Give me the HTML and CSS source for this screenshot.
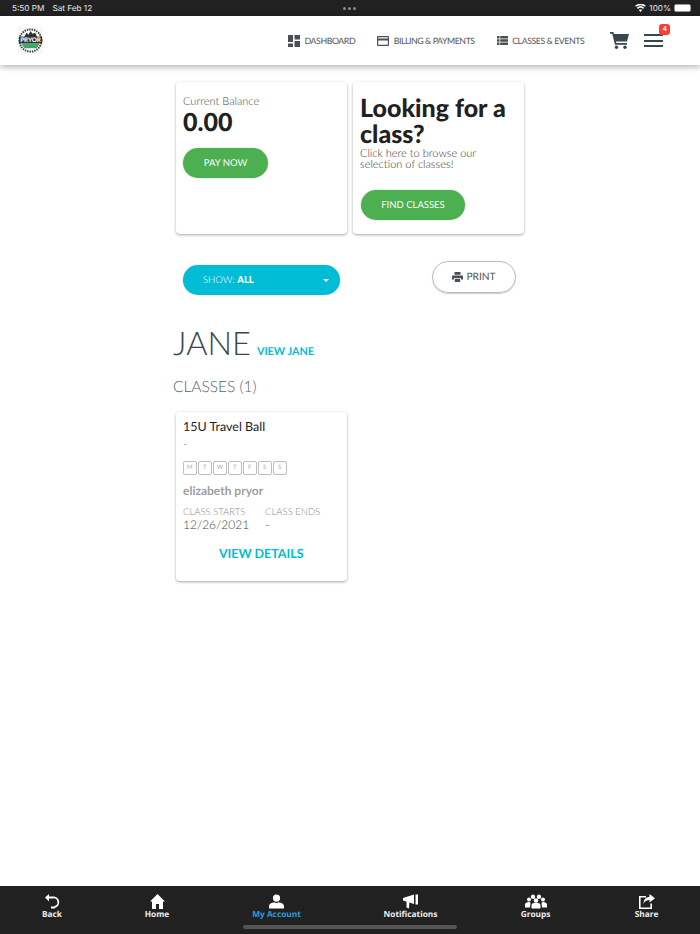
FILE: index.html
```html
<!DOCTYPE html>
<html lang="en">
<head>
    <meta charset="UTF-8">
    <title>My Account</title>
    <link rel="stylesheet" href="styles.css">
</head>
<body>
<div class="status">
    <div class="status-time"><span>5:50 PM</span><span>Sat Feb 12</span></div>
    <div class="status-dots"><i></i><i></i><i></i></div>
    <div class="status-right">
        <svg width="11" height="8" viewBox="0 0 22 16"><path fill="#fff" d="M11 16l-3.400-4a5 5 0 0 1 6.800 0zM5.800 9.800L3.700 7.400a11 11 0 0 1 14.600 0l-2.100 2.400a8 8 0 0 0-10.400 0zM2.300 5.700L.3 3.400a16 16 0 0 1 21.400 0l-2 2.300a13 13 0 0 0-17.400 0z"/></svg>
        <span>100%</span>
        <span class="battery"><b></b></span>
    </div>
</div>

<header class="topbar">
    <svg class="logo" width="25" height="27" viewBox="0 0 26 28">
        <rect width="26" height="28" fill="#f7f7f5"/>
        <circle cx="13" cy="14" r="11.500" fill="#fff" stroke="#3a3f3a" stroke-width="2" stroke-dasharray="1.500 1"/>
        <path fill="#2d332e" d="M6 11l3-5 2 2 2-4 2 3 3-1 2 5z"/>
        <path fill="#3fa862" d="M3.500 17h19l-3 5h-13z"/>
        <rect x="1" y="10" width="24" height="7" fill="#2c322d"/>
        <text x="13" y="16" class="logo-text">PRYOR</text>
    </svg>
    <nav class="topnav">
        <a class="navlink">
            <svg width="12" height="12" viewBox="0 0 12 12"><path fill="#4a4f54" d="M0 0h5v7H0zM6.500 0H12v4.500H6.500zM6.500 6H12v6H6.500zM0 8.500h5V12H0z"/></svg>
            DASHBOARD
        </a>
        <a class="navlink">
            <svg width="12" height="10" viewBox="0 0 12 10"><path fill="#4a4f54" fill-rule="evenodd" d="M1 0h10a1 1 0 0 1 1 1v8a1 1 0 0 1-1 1H1a1 1 0 0 1-1-1V1a1 1 0 0 1 1-1zm.2 1.200v1.300h9.600V1.200zm0 3.200v4.400h9.600V4.400z"/></svg>
            BILLING &amp; PAYMENTS
        </a>
        <a class="navlink">
            <svg width="11" height="9" viewBox="0 0 11 9"><path fill="#4a4f54" d="M0 0h2.500v2.500H0zM3.200 0H11v2.500H3.200zM0 3.200h2.500v2.600H0zM3.200 3.200H11v2.600H3.200zM0 6.500h2.500V9H0zM3.200 6.500H11V9H3.200z"/></svg>
            CLASSES &amp; EVENTS
        </a>
    </nav>
    <svg class="cart" width="19" height="17" viewBox="0 0 19 17"><path fill="#37474f" d="M0 0h3.400l.6 2H19l-2 7.500H6l.4 1.500H17v1.700H5L2.200 1.700H0z"/><circle cx="6.500" cy="15.300" r="1.700" fill="#37474f"/><circle cx="15" cy="15.300" r="1.700" fill="#37474f"/></svg>
    <div class="menu">
        <i></i><i></i><i></i>
        <span class="badge">4</span>
    </div>
</header>

<main class="content">
    <div class="cards">
        <section class="card balance">
            <p class="balance-label">Current Balance</p>
            <p class="balance-value">0.00</p>
            <a class="btn-green pay">PAY NOW</a>
        </section>
        <section class="card promo">
            <h2>Looking for a class?</h2>
            <p>Click here to browse our selection of classes!</p>
            <a class="btn-green find">FIND CLASSES</a>
        </section>
    </div>

    <div class="filters">
        <div class="show-select">
            <span>SHOW: <b>ALL</b></span>
            <i class="caret"></i>
        </div>
        <a class="print">
            <svg width="11" height="10" viewBox="0 0 11 10"><path fill="#4a4f54" d="M2.500 0h6v2.800h-6zM1 3.400h9a1 1 0 0 1 1 1V7.500H9V6H2v1.500H0V4.400a1 1 0 0 1 1-1zM2.800 6.800h5.400V10H2.800z"/></svg>
            PRINT
        </a>
    </div>

    <div class="student">
        <h1>JANE</h1>
        <a>VIEW JANE</a>
    </div>
    <h3 class="classes-title">CLASSES (1)</h3>

    <section class="card class-card">
        <h4>15U Travel Ball</h4>
        <p class="dash">-</p>
        <div class="days">
            <span>M</span><span>T</span><span>W</span><span>T</span><span>F</span><span>S</span><span>S</span>
        </div>
        <p class="coach">elizabeth pryor</p>
        <div class="dates">
            <div class="date-col">
                <small>CLASS STARTS</small>
                <span>12/26/2021</span>
            </div>
            <div class="date-col">
                <small>CLASS ENDS</small>
                <span>-</span>
            </div>
        </div>
        <a class="details">VIEW DETAILS</a>
    </section>
</main>

<footer class="tabbar">
    <a class="tab tab-back">
        <svg width="16" height="15" viewBox="0 0 16 15"><path fill="none" stroke="#fff" stroke-width="1.800" d="M3 3.500h5.500a4.800 4.800 0 0 1 2 9.500"/><path fill="#fff" d="M1 3.500L5 0v7.500z"/><path fill="#fff" d="M7 12.500h4v2H7z"/></svg>
        Back
    </a>
    <a class="tab tab-home">
        <svg width="15" height="15" viewBox="0 0 15 15"><path fill="#fff" d="M7.500 0L15 7.500h-2V15H9V10H6v5H2V7.500H0z"/></svg>
        Home
    </a>
    <a class="tab tab-account active">
        <svg width="15" height="15" viewBox="0 0 15 14"><circle cx="7.500" cy="3.600" r="3.600" fill="#fff"/><path fill="#fff" d="M0 14v-2.500C0 9.500 3 8 5 7.800c1.500 1 3.500 1 5 0 2 .2 5 1.700 5 3.700V14z"/></svg>
        My Account
    </a>
    <a class="tab tab-notify">
        <svg width="15" height="15" viewBox="0 0 15 14"><path fill="#fff" d="M0 3.500L11 0v9.500L6.300 8 6 14 3.500 13 3.500 7 0 6zM12.500 0H15v10h-2.500z"/></svg>
        Notifications
    </a>
    <a class="tab tab-groups">
        <svg width="22" height="15" viewBox="0 0 22 14"><g fill="#fff"><circle cx="4" cy="5" r="2"/><circle cx="18" cy="5" r="2"/><circle cx="8" cy="2.200" r="2.200"/><circle cx="14" cy="2.200" r="2.200"/><circle cx="11" cy="6" r="2.300"/><path d="M0 13v-3c0-1.500 1.500-2.500 4-2.500l1.500.5L5 13zM22 13v-3c0-1.500-1.500-2.500-4-2.500l-1.500.5.500 5zM6.500 14v-3.500c0-1.500 2-2.300 4.500-2.300s4.500.8 4.500 2.300V14z"/></g></svg>
        Groups
    </a>
    <a class="tab tab-share">
        <svg width="16" height="15" viewBox="0 0 16 15"><path fill="none" stroke="#fff" stroke-width="1.600" d="M7 2.800H.8v11.400h11.400V9.500"/><path fill="#fff" d="M10.500 0L16 4.300l-5.500 4.200V6C7.500 6 5.500 7 4.500 10c0-4.500 2.500-7 6-7.300z"/></svg>
        Share
    </a>
    <i class="home-indicator"></i>
</footer>
</body>
</html>
```

FILE: styles.css
```css
*{margin: 0; padding: 0; box-sizing: border-box;}
html, body{height: 100%;}
body{
    display: flex;
    flex-direction: column;
    height: 934px;
    overflow: hidden;
    background: #fff;
    font-family: "Lato", "Liberation Sans", sans-serif;
    color: #212121;
    text-rendering: geometricPrecision;
}
a{display: block; text-decoration: none;}

/* ios status bar */
.status{
    height: 16px;
    flex: none;
    background: #212121;
    color: #e8e8e8;
    font-family: "Inter", "Liberation Sans", sans-serif;
    font-size: 8.2px;
    display: flex;
    align-items: center;
    justify-content: space-between;
    padding: 0 9px 0 12px;
    position: relative;
}
.status-time{display: flex; gap: 8px;}
.status-dots{
    display: flex;
    gap: 2px;
    position: absolute;
    left: 343px;
    top: 7px;
}
.status-dots i{width: 3px; height: 3px; border-radius: 50%; background: #8a8a8a;}
.status-right{display: flex; align-items: center; gap: 3px;}
.battery{
    width: 17px;
    height: 8px;
    border: 1px solid #999;
    border-radius: 2px;
    display: block;
}
.battery b{display: block; height: 100%; background: #fff;}

/* top nav */
.topbar{
    height: 49px;
    flex: none;
    display: flex;
    align-items: center;
    padding-left: 18px;
    background: #fff;
    box-shadow: 0 2px 6px rgba(0, 0, 0, 0.3);
    position: relative;
}
.logo{flex: none;}
.logo-text{
    font-family: "Lato", sans-serif;
    font-weight: 900;
    font-size: 6.500px;
    fill: #fff;
    text-anchor: middle;
}
.topnav{
    display: flex;
    gap: 22px;
    margin-left: 245px;
}
.navlink{
    display: flex;
    align-items: center;
    gap: 4.500px;
    font-size: 8.800px;
    letter-spacing: -0.45px;
    color: #555;
    white-space: nowrap;
}
.cart{margin-left: 26px;}
.menu{
    width: 19px;
    margin-left: 15px;
    position: relative;
    display: flex;
    flex-direction: column;
    gap: 3.500px;
}
.menu i{display: block; height: 2px; background: #37474f;}
.badge{
    position: absolute;
    top: -10px;
    left: 15px;
    width: 11px;
    height: 11px;
    border-radius: 3px;
    background: #f44336;
    color: #fff;
    font-size: 7px;
    font-weight: 700;
    text-align: center;
    line-height: 11px;
}

/* main column */
.content{
    flex: 1;
    width: 360px;
    margin: 0 auto;
    padding-top: 17px;
}
.card{
    background: #fff;
    border-radius: 4px;
    box-shadow: 0 1px 3px rgba(0, 0, 0, 0.35);
}
.cards{
    display: flex;
    gap: 6.500px;
    padding: 0 6px;
}
.cards .card{width: 170.500px; height: 152px; padding: 12px 7px;}
.cards .balance{padding-top: 13px;}
.balance-label{
    font-size: 11px;
    font-weight: 300;
    line-height: 14px;
    color: #444;
}
.balance-value{
    font-size: 25px;
    font-weight: 900;
    line-height: 30px;
    margin-top: -2px;
    color: #212121;
}
.btn-green{
    background: #4caf50;
    color: #fff;
    font-size: 9.500px;
    text-align: center;
    border-radius: 15px;
    height: 30px;
    line-height: 32px;
    box-shadow: 0 0 2px rgba(0, 0, 0, 0.2);
}
.pay{width: 85px; margin-top: 11px;}
.promo h2{
    font-size: 25px;
    font-weight: 900;
    line-height: 26px;
    color: #212121;
    margin-top: 1px;
}
.promo p{
    font-size: 11px;
    font-weight: 300;
    line-height: 11px;
    color: #333;
    margin-top: 1px;
    width: 130px;
}
.find{width: 104px; margin: 20px 0 0 1px;}

/* filter row */
.filters{
    display: flex;
    justify-content: space-between;
    align-items: flex-start;
    padding: 27px 14px 0 13px;
}
.show-select{
    width: 157px;
    height: 30px;
    margin-top: 4px;
    background: #00bcd4;
    border-radius: 15px;
    color: #fff;
    font-size: 9.500px;
    display: flex;
    align-items: center;
    justify-content: space-between;
    padding: 0 11px 0 20px;
    box-shadow: 0 0 2px rgba(0, 0, 0, 0.2);
    font-weight: 300;
}
.show-select b{font-weight: 900;}
.caret{
    border: 3px solid transparent;
    border-top: 3px solid #fff;
    border-bottom: 0;
}
.print{
    width: 84px;
    height: 32px;
    border: 1px solid #bbb;
    border-radius: 16px;
    display: flex;
    align-items: center;
    justify-content: center;
    gap: 3px;
    font-size: 10.200px;
    line-height: 32px;
    color: #555;
    box-shadow: 0 1px 1px rgba(0, 0, 0, 0.2);
}

/* student */
.student{
    display: flex;
    align-items: baseline;
    gap: 6px;
    margin-top: 29px;
    padding-left: 3px;
}
.student h1{
    font-size: 32.500px;
    font-weight: 300;
    line-height: 38px;
    color: #37474f;
}
.student a{font-size: 10.800px; font-weight: 700; color: #00bcd4;}
.classes-title{
    font-size: 15.500px;
    font-weight: 300;
    line-height: 20px;
    color: #546070;
    margin: 15px 0 0 3px;
}

/* class card */
.class-card{
    width: 170.500px;
    height: 169px;
    margin: 15px 0 0 6px;
    padding: 7px;
}
.class-card h4{
    font-size: 12.500px;
    font-weight: 400;
    line-height: 16px;
    color: #212121;
}
.dash{font-size: 11px; font-weight: 300; line-height: 14px; color: #555; margin-top: 3px;}
.days{display: flex; gap: 1.500px; margin-top: 9px;}
.days span{
    width: 13.500px;
    height: 14px;
    border: 1px solid #bdbdbd;
    border-radius: 2px;
    font-size: 6px;
    line-height: 12px;
    text-align: center;
    color: #aaa;
}
.coach{
    font-size: 12px;
    font-weight: 700;
    line-height: 16px;
    color: #9e9e9e;
    margin-top: 8px;
}
.dates{display: flex; gap: 16px; margin-top: 9px;}
.date-col{display: flex; flex-direction: column;}
.date-col small{font-size: 9.500px; font-weight: 300; line-height: 10px; color: #8a8a8a;}
.date-col span{font-size: 12px; font-weight: 300; line-height: 13px; color: #444;}
.details{
    font-size: 12.500px;
    font-weight: 700;
    color: #00bcd4;
    text-align: center;
    margin-top: 15px;
}

/* app tab bar */
.tabbar{
    height: 48px;
    flex: none;
    background: #212121;
    position: relative;
    display: grid;
    grid-template-columns: 104px 106px 133px 135px 115px 107px;
    font-family: "Open Sans", "Liberation Sans", sans-serif;
}
.tab{
    display: flex;
    flex-direction: column;
    align-items: center;
    padding-top: 8px;
    font-size: 8.300px;
    font-weight: 700;
    line-height: 11px;
    color: #eee;
}
.tab.active{color: #2d9cdb;}
.home-indicator{
    position: absolute;
    left: 243px;
    top: 39px;
    width: 214px;
    height: 4px;
    border-radius: 2px;
    background: #555;
}
```
